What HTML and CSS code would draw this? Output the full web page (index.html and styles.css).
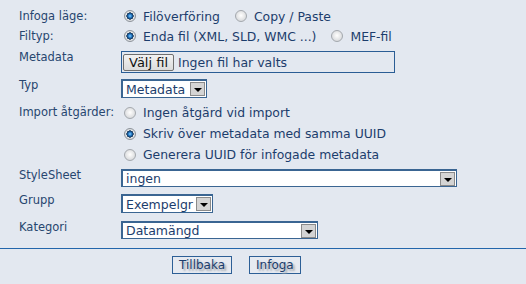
FILE: index.html
```html
<!DOCTYPE html>
<html lang="sv">
<head>
    <meta charset="UTF-8">
    <title>Infoga metadata</title>
    <link rel="stylesheet" href="styles.css">
</head>
<body>
    <div class="form">
        <div class="row radio-row">
            <div class="label">Infoga läge:</div>
            <div class="field inline">
                <label class="opt"><input type="radio" name="mode" checked> Filöverföring</label>
                <label class="opt"><input type="radio" name="mode"> Copy / Paste</label>
            </div>
        </div>
        <div class="row radio-row">
            <div class="label">Filtyp:</div>
            <div class="field inline">
                <label class="opt"><input type="radio" name="ftype" checked> Enda fil (XML, SLD, WMC ...)</label>
                <label class="opt"><input type="radio" name="ftype"> MEF-fil</label>
            </div>
        </div>
        <div class="row file-row">
            <div class="label">Metadata</div>
            <div class="file-box">
                <span class="file-btn">Välj fil</span>
                <span class="file-name">Ingen fil har valts</span>
            </div>
        </div>
        <div class="row typ-row">
            <div class="label">Typ</div>
            <div class="select w-typ">
                <span class="sel-text">Metadata</span>
                <span class="sel-btn"></span>
            </div>
        </div>
        <div class="row radio-row import-row">
            <div class="label">Import åtgärder:</div>
            <div class="field">
                <label class="opt line"><input type="radio" name="action"> Ingen åtgärd vid import</label>
                <label class="opt line"><input type="radio" name="action" checked> Skriv över metadata med samma UUID</label>
                <label class="opt line"><input type="radio" name="action"> Generera UUID för infogade metadata</label>
            </div>
        </div>
        <div class="row style-row">
            <div class="label">StyleSheet</div>
            <div class="select w-style">
                <span class="sel-text">ingen</span>
                <span class="sel-btn"></span>
            </div>
        </div>
        <div class="row group-row">
            <div class="label">Grupp</div>
            <div class="select w-group">
                <span class="sel-text">Exempelgr</span>
                <span class="sel-btn"></span>
            </div>
        </div>
        <div class="row cat-row">
            <div class="label">Kategori</div>
            <div class="select w-cat">
                <span class="sel-text">Datamängd</span>
                <span class="sel-btn"></span>
            </div>
        </div>
    </div>

    <hr class="sep">

    <div class="actions">
        <button class="btn">Tillbaka</button>
        <button class="btn">Infoga</button>
    </div>
</body>
</html>
```

FILE: styles.css
```css
body {
    margin: 0;
    background: #e3e8f0;
    font-family: "DejaVu Sans", Verdana, sans-serif;
    color: #1c3d6c;
}
.form {
    padding-top: 6px;
}
.row {
    display: flex;
    align-items: flex-start;
}
.label {
    width: 121px;
    flex: none;
    box-sizing: border-box;
    padding-left: 19px;
    font-size: 11.5px;
    line-height: 12px;
    color: #27466f;
}
.radio-row .label {
    padding-top: 4px;
}
.field.inline {
    display: flex;
}
.opt {
    display: flex;
    align-items: center;
    height: 20px;
    font-size: 12.4px;
    margin-right: 12px;
}
.opt.line {
    height: 21px;
}
.opt input {
    appearance: none;
    -webkit-appearance: none;
    width: 12px;
    height: 12px;
    margin: 0 7px 0 3px;
    border: 1px solid #a4a8ad;
    border-radius: 50%;
    background: radial-gradient(circle at 50% 45%, #ffffff 0, #f2f2f2 2px, #d6d8db 6px);
    box-sizing: border-box;
}
.opt input:checked {
    border-color: #8d939a;
    background: radial-gradient(circle at 50% 50%, #8fd0ff 0, #2e86d0 1.5px, #174f86 2.6px, #0b2848 3.4px, #e4e6e8 3.8px, #d0d3d6 6px);
}
.file-row {
    margin-top: 5px;
}
.file-box {
    width: 274px;
    height: 22px;
    box-sizing: border-box;
    border: 1px solid #2a5d95;
    display: flex;
    align-items: center;
    padding-left: 1px;
}
.file-btn {
    font-size: 13px;
    color: #111;
    background: linear-gradient(#f2f2f2, #dcdcdc);
    border: 1px solid #6f6f6f;
    border-radius: 2px;
    height: 17px;
    line-height: 15px;
    box-sizing: border-box;
    padding: 0 5px;
}
.file-name {
    font-size: 12.5px;
    margin-left: 4px;
    color: #1c3d6c;
}
.select {
    display: flex;
    align-items: center;
    box-sizing: border-box;
    height: 18px;
    background: #fff;
    border: 2px solid #3a6592;
    border-right-width: 1px;
    border-bottom-width: 1px;
}
.sel-text {
    flex: 1;
    font-size: 12.5px;
    padding-left: 3px;
    white-space: nowrap;
    overflow: hidden;
}
.sel-btn {
    width: 15px;
    height: 14px;
    margin-right: 1px;
    box-sizing: border-box;
    border: 1px solid #8a8a8a;
    background: #d4d4d4;
    display: flex;
    align-items: center;
    justify-content: center;
}
.sel-btn::after {
    content: "";
    border-left: 4px solid transparent;
    border-right: 4px solid transparent;
    border-top: 4px solid #000;
    margin-top: 2px;
}
.typ-row {
    margin-top: 6px;
}
.w-typ {
    width: 86px;
    height: 19px;
}
.import-row {
    margin-top: 4px;
}
.style-row {
    margin-top: 4px;
}
.w-style {
    width: 336px;
}
.group-row {
    margin-top: 7px;
}
.w-group {
    width: 92px;
    height: 19px;
}
.cat-row {
    margin-top: 8px;
}
.w-cat {
    width: 197px;
}
.sep {
    margin: 9px 0 0;
    border: 0;
    border-top: 1px solid #2366ab;
}
.actions {
    display: flex;
    gap: 17px;
    padding-left: 172px;
    margin-top: 7px;
}
.btn {
    font-family: "DejaVu Sans", Verdana, sans-serif;
    font-size: 12px;
    color: #1c3d6c;
    background: #e6eaf1;
    border: 1px solid #2d5f96;
    height: 18px;
    padding: 0 6px;
    line-height: 16px;
    text-shadow: 2px 2px 2px #9aa0a8;
}
```
